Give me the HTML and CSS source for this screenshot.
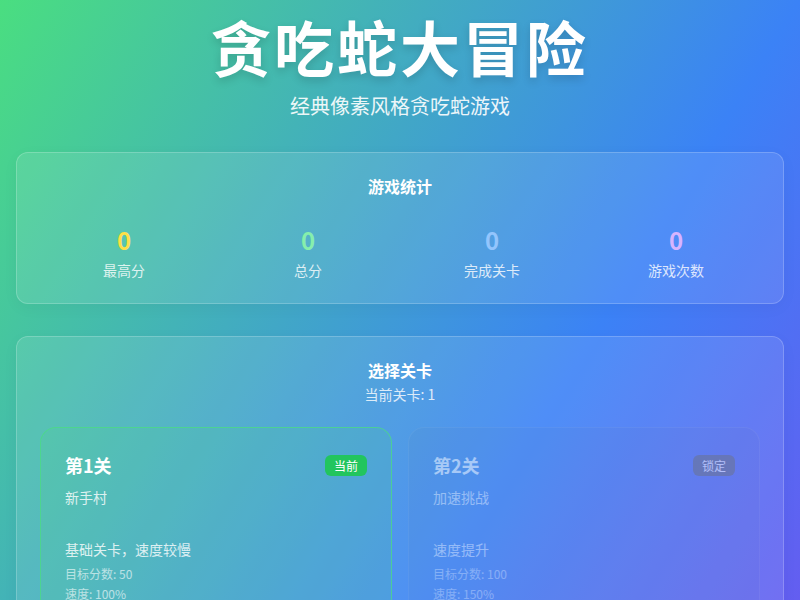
FILE: index.html
```html
<!DOCTYPE html>
<html lang="zh-CN">
<head>
<meta charset="utf-8">
<title>贪吃蛇大冒险</title>
<link rel="stylesheet" href="styles.css">
</head>
<body>
<div class="page">
  <header class="header">
    <h1 class="title">贪吃蛇大冒险</h1>
    <p class="subtitle">经典像素风格贪吃蛇游戏</p>
  </header>

  <section class="panel stats">
    <h2 class="panel-title">游戏统计</h2>
    <div class="stats-grid">
      <div class="stat"><div class="stat-num yellow">0</div><div class="stat-label">最高分</div></div>
      <div class="stat"><div class="stat-num green">0</div><div class="stat-label">总分</div></div>
      <div class="stat"><div class="stat-num blue">0</div><div class="stat-label">完成关卡</div></div>
      <div class="stat"><div class="stat-num purple">0</div><div class="stat-label">游戏次数</div></div>
    </div>
  </section>

  <section class="panel levels">
    <h2 class="panel-title">选择关卡</h2>
    <p class="panel-sub">当前关卡: 1</p>
    <div class="level-grid">
      <div class="level current">
        <div class="level-head"><span class="level-name">第1关</span><span class="badge badge-current">当前</span></div>
        <div class="level-sub">新手村</div>
        <div class="level-desc">基础关卡，速度较慢</div>
        <div class="level-meta">目标分数: 50</div>
        <div class="level-meta">速度: 100%</div>
      </div>
      <div class="level locked">
        <div class="level-head"><span class="level-name">第2关</span><span class="badge badge-locked">锁定</span></div>
        <div class="level-sub">加速挑战</div>
        <div class="level-desc">速度提升</div>
        <div class="level-meta">目标分数: 100</div>
        <div class="level-meta">速度: 150%</div>
      </div>
      <div class="level locked">
        <div class="level-head"><span class="level-name">第3关</span><span class="badge badge-locked">锁定</span></div>
        <div class="level-sub">障碍迷宫</div>
        <div class="level-desc">出现障碍物</div>
        <div class="level-meta">目标分数: 150</div>
        <div class="level-meta">速度: 150%</div>
      </div>
      <div class="level locked">
        <div class="level-head"><span class="level-name">第4关</span><span class="badge badge-locked">锁定</span></div>
        <div class="level-sub">极速狂飙</div>
        <div class="level-desc">速度极快</div>
        <div class="level-meta">目标分数: 200</div>
        <div class="level-meta">速度: 200%</div>
      </div>
    </div>
  </section>
</div>
</body>
</html>
```

FILE: styles.css
```css
* { box-sizing: border-box; }
html, body { margin: 0; padding: 0; }
body {
  min-height: 1300px;
  background: linear-gradient(to bottom right, #4ade80, #3b82f6, #9333ea);
  font-family: "Noto Sans CJK SC", "Noto Sans", sans-serif;
  color: #fff;
}
.page {
  padding: 0 16px 32px;
}
.header {
  text-align: center;
  padding-top: 8px;
}
.title {
  margin: 0;
  font-size: 60px;
  line-height: 76px;
  font-weight: 700;
  letter-spacing: 3px;
  text-shadow: 0 4px 8px rgba(0, 0, 0, 0.15);
}
.subtitle {
  margin: 8px 0 0;
  font-size: 20px;
  line-height: 28px;
  opacity: 0.9;
}
.panel {
  background: rgba(255, 255, 255, 0.1);
  border: 1px solid rgba(255, 255, 255, 0.2);
  border-radius: 12px;
  padding: 23px;
  box-shadow: 0 4px 16px rgba(0, 0, 0, 0.04);
}
.stats { margin-top: 32px; }
.levels { margin-top: 32px; }
.panel-title {
  margin: 0;
  text-align: center;
  font-size: 16px;
  line-height: 20px;
  font-weight: 700;
}
.stats-grid {
  display: grid;
  grid-template-columns: repeat(4, 1fr);
  gap: 16px;
  margin-top: 28px;
  text-align: center;
}
.stat-num {
  font-size: 24px;
  line-height: 32px;
  font-weight: 700;
}
.yellow { color: #fde047; }
.green { color: #86efac; }
.blue { color: #93c5fd; }
.purple { color: #d8b4fe; }
.stat-label {
  margin-top: 4px;
  font-size: 14px;
  line-height: 20px;
  opacity: 0.8;
}
.panel-sub {
  margin: 4px 0 0;
  text-align: center;
  font-size: 14px;
  line-height: 20px;
  opacity: 0.8;
}
.level-grid {
  display: grid;
  grid-template-columns: 1fr 1fr;
  gap: 16px;
  margin-top: 23px;
}
.level {
  border-radius: 16px;
  padding: 23px 24px;
  border: 1px solid rgba(255, 255, 255, 0.1);
}
.level.current {
  background: rgba(74, 222, 128, 0.15);
  border-color: rgba(74, 222, 128, 0.7);
}
.level.locked {
  background: rgba(100, 116, 139, 0.1);
  opacity: 0.5;
}
.level-head {
  display: flex;
  justify-content: space-between;
  align-items: center;
  height: 28px;
}
.level-name {
  font-size: 18px;
  line-height: 28px;
  font-weight: 700;
}
.badge {
  font-size: 12px;
  line-height: 21px;
  padding: 0 9px;
  border-radius: 6px;
}
.badge-current { background: #22c55e; }
.badge-locked { background: #6b7280; }
.level-sub {
  margin-top: 8px;
  font-size: 14px;
  line-height: 20px;
  opacity: 0.8;
}
.level-desc {
  margin-top: 32px;
  font-size: 14px;
  line-height: 20px;
  opacity: 0.8;
}
.level-meta {
  margin-top: 4px;
  font-size: 12px;
  line-height: 16px;
  opacity: 0.6;
}
.level-desc + .level-meta { margin-top: 7px; }
```
